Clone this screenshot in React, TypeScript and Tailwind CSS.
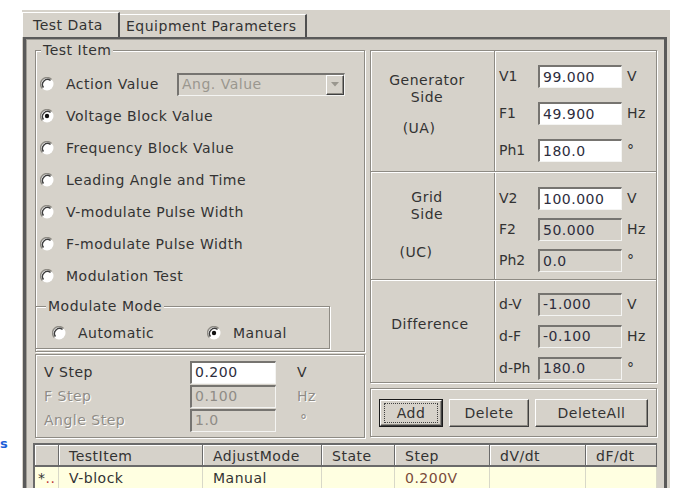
import type { ReactNode } from 'react';

const etched = 'border border-[#8e8b84] shadow-[inset_1px_1px_0_#ffffff,1px_1px_0_#ffffff]';
const raised =
  'border border-t-white border-l-white border-b-[#404040] border-r-[#404040] shadow-[inset_-1px_-1px_0_#8e8b84]';
const disabledText = 'text-[#8f8c86] [text-shadow:1px_1px_0_#ffffff]';

function Radio({ checked = false }: { checked?: boolean }) {
  return (
    <svg width="14" height="14" viewBox="0 0 14 14" className="shrink-0">
      <circle cx="7" cy="7" r="6.5" fill="#ffffff" />
      <path d="M11.6 2.4 A6.5 6.5 0 0 0 2.4 11.6" fill="none" stroke="#8e8b84" strokeWidth="1.4" />
      <path d="M10.5 3.5 A5 5 0 0 0 3.5 10.5" fill="none" stroke="#3c3c3c" strokeWidth="1.4" />
      {checked && <circle cx="7" cy="7" r="2.2" fill="#111111" />}
    </svg>
  );
}

function Field({ value, white = false, dim = false, w = 'w-[84px]' }: { value: string; white?: boolean; dim?: boolean; w?: string }) {
  return (
    <div
      className={`${w} h-[23px] shrink-0 flex items-center pl-[3px] border-t-2 border-l-2 border-b border-r border-t-[#767470] border-l-[#767470] border-b-[#f4f4f2] border-r-[#f4f4f2] ${
        white ? 'bg-white' : ''
      } ${dim ? 'text-[#8f8c86]' : 'text-[#2d2d3d]'}`}
    >
      {value}
    </div>
  );
}

function Group({ title, className, legend = 'ml-[5px]', children }: { title: string; className: string; legend?: string; children: ReactNode }) {
  return (
    <div className={`${etched} ${className}`}>
      <div className={`-mt-[9px] ${legend} w-fit px-[2px] bg-[#d6d2ca] leading-[16px]`}>{title}</div>
      {children}
    </div>
  );
}

const testItems = [
  { label: 'Voltage Block Value', checked: true },
  { label: 'Frequency Block Value' },
  { label: 'Leading Angle and Time' },
  { label: 'V-modulate Pulse Width' },
  { label: 'F-modulate Pulse Width' },
  { label: 'Modulation Test' },
];

type Row = { l: string; v: string; u: string; white?: boolean };

function InputRows({ rows, rowH, pt }: { rows: Row[]; rowH: string; pt: string }) {
  return (
    <div className={`flex-1 pl-[3px] ${pt}`}>
      {rows.map((r) => (
        <div key={r.l} className={`${rowH} flex items-center`}>
          <span className="w-[39px] shrink-0 tracking-normal">{r.l}</span>
          <Field value={r.v} white={r.white} />
          <span className="ml-[5px]">{r.u}</span>
        </div>
      ))}
    </div>
  );
}

function VDivider() {
  return (
    <div className="flex shrink-0">
      <div className="w-px bg-[#8e8b84]" />
      <div className="w-px bg-white" />
    </div>
  );
}

function HDivider() {
  return (
    <div>
      <div className="h-px bg-[#8e8b84]" />
      <div className="h-px bg-white" />
    </div>
  );
}

const columns = [
  { name: '', w: 'w-[24px]' },
  { name: 'TestItem', w: 'w-[144px]' },
  { name: 'AdjustMode', w: 'w-[119px]' },
  { name: 'State', w: 'w-[73px]' },
  { name: 'Step', w: 'w-[95px]' },
  { name: 'dV/dt', w: 'w-[96px]' },
  { name: 'dF/dt', w: 'flex-1' },
];

export default function App() {
  return (
    <div className="w-[700px] h-[500px] bg-white flex font-['DejaVu_Sans',sans-serif] text-[14px] tracking-[0.5px] text-[#333333] overflow-hidden">
      <div className="w-[22px] shrink-0 pt-[434px]">
        <span className="block text-[#1d5fd8] font-bold text-[13px] leading-[20px] tracking-normal">s</span>
      </div>

      <div className="mt-[10px] w-[648px] h-[478px] bg-[#d6d2ca] flex flex-col overflow-hidden">
        {/* tabs */}
        <div className="h-[27px] shrink-0 flex items-end">
          <div className="h-[25px] w-[98px] flex items-center pl-[10px] border-l border-t border-l-white border-t-white border-r-2 border-r-[#505050]">
            Test Data
          </div>
          <div className="h-[23px] w-[187px] flex items-center pl-[6px] border-t border-t-white border-r-2 border-r-[#505050]">
            Equipment Parameters
          </div>
        </div>

        {/* tab page */}
        <div className="flex-1 ml-[1px] mr-[3px] border-t-2 border-l-[3px] border-r-[3px] border-[#5a5a5a] shadow-[inset_1px_1px_0_#a09d96] pl-[9px] pr-[7px]">
          <div className="flex gap-[5px]">
            {/* left column */}
            <div className="w-[330px] flex flex-col">
              <Group title="Test Item" className="mt-[11px] pb-[2px]">
                <div className="mt-[10px] h-[32px] flex items-center pl-[4px]">
                  <Radio />
                  <span className="ml-[12px] w-[111px]">Action Value</span>
                  <div className="w-[168px] h-[23px] flex border-t-2 border-l-2 border-b border-r border-t-[#767470] border-l-[#767470] border-b-[#f4f4f2] border-r-[#f4f4f2]">
                    <div className="flex-1 flex items-center pl-[3px] text-[#9a978f]">Ang. Value</div>
                    <div className={`w-[18px] h-full flex items-center justify-center ${raised}`}>
                      <svg width="8" height="5" viewBox="0 0 8 5">
                        <path d="M0 0 L8 0 L4 4.5 Z" fill="#9a978f" />
                      </svg>
                    </div>
                  </div>
                </div>
                {testItems.map((it) => (
                  <div key={it.label} className="h-[32px] flex items-center pl-[4px]">
                    <Radio checked={it.checked} />
                    <span className="ml-[12px]">{it.label}</span>
                  </div>
                ))}
                <Group title="Modulate Mode" legend="ml-[10px]" className="-ml-px w-[295px] mt-[14px] pb-[3px]">
                  <div className="mt-[7px] h-[24px] flex items-center pl-[16px]">
                    <Radio />
                    <span className="ml-[12px] w-[129px]">Automatic</span>
                    <Radio checked />
                    <span className="ml-[12px]">Manual</span>
                  </div>
                </Group>
              </Group>

              <div className={`${etched} mt-[2px] pt-[5px] pb-[5px]`}>
                <div className="h-[24px] flex items-center pl-[8px]">
                  <span className="w-[146px]">V Step</span>
                  <Field value="0.200" white w="w-[86px]" />
                  <span className="ml-[21px]">V</span>
                </div>
                <div className="h-[24px] flex items-center pl-[8px]">
                  <span className={`w-[146px] ${disabledText}`}>F Step</span>
                  <Field value="0.100" dim w="w-[86px]" />
                  <span className={`ml-[21px] ${disabledText}`}>Hz</span>
                </div>
                <div className="h-[24px] flex items-center pl-[8px]">
                  <span className={`w-[146px] ${disabledText}`}>Angle Step</span>
                  <Field value="1.0" dim w="w-[86px]" />
                  <span className={`ml-[24px] ${disabledText}`}>°</span>
                </div>
              </div>
            </div>

            {/* right column */}
            <div className="w-[287px] flex flex-col">
              <div className={`${etched} mt-[11px]`}>
                <div className="h-[120px] flex">
                  <div className="w-[123px] shrink-0 pt-[21px] leading-[17px] text-center">
                    <div className="pr-[11px]">Generator</div>
                    <div className="pr-[11px]">Side</div>
                    <div className="mt-[14px] pr-[27px]">(UA)</div>
                  </div>
                  <VDivider />
                  <InputRows
                    rowH="h-[37px]"
                    pt="pt-[7px]"
                    rows={[
                      { l: 'V1', v: '99.000', u: 'V', white: true },
                      { l: 'F1', v: '49.900', u: 'Hz', white: true },
                      { l: 'Ph1', v: '180.0', u: '°', white: true },
                    ]}
                  />
                </div>
                <HDivider />
                <div className="h-[106px] flex">
                  <div className="w-[123px] shrink-0 pt-[16px] leading-[17px] text-center">
                    <div className="pr-[11px]">Grid</div>
                    <div className="pr-[11px]">Side</div>
                    <div className="mt-[21px] pr-[33px]">(UC)</div>
                  </div>
                  <VDivider />
                  <InputRows
                    rowH="h-[31px]"
                    pt="pt-[10px]"
                    rows={[
                      { l: 'V2', v: '100.000', u: 'V', white: true },
                      { l: 'F2', v: '50.000', u: 'Hz' },
                      { l: 'Ph2', v: '0.0', u: '°' },
                    ]}
                  />
                </div>
                <HDivider />
                <div className="h-[101px] flex">
                  <div className="w-[123px] shrink-0 pt-[35px] leading-[17px] text-center pr-[5px]">Difference</div>
                  <VDivider />
                  <InputRows
                    rowH="h-[32px]"
                    pt="pt-[7px]"
                    rows={[
                      { l: 'd-V', v: '-1.000', u: 'V' },
                      { l: 'd-F', v: '-0.100', u: 'Hz' },
                      { l: 'd-Ph', v: '180.0', u: '°' },
                    ]}
                  />
                </div>
              </div>

              <div className={`${etched} mt-[5px] h-[49px] pt-[10px] pl-[8px] flex gap-[6px]`}>
                <div className="w-[64px] h-[28px] border border-[#1a1a1a]">
                  <div className={`h-full ${raised} flex items-center justify-center`}>
                    <div className="w-[54px] h-[20px] border border-dotted border-[#404040] flex items-center justify-center">
                      Add
                    </div>
                  </div>
                </div>
                <div className={`w-[80px] h-[28px] ${raised} flex items-center justify-center`}>Delete</div>
                <div className={`w-[113px] h-[28px] ${raised} flex items-center justify-center`}>DeleteAll</div>
              </div>
            </div>
          </div>

          {/* table */}
          <div className="mt-[5px] -ml-[2px] w-[624px] border-t-2 border-l-2 border-[#6a6a6a]">
            <div className="h-[22px] flex">
              {columns.map((c) => (
                <div
                  key={c.name || 'rh'}
                  className={`${c.w} shrink-0 h-full flex items-center pl-[10px] pt-[3px] border-r border-b-2 border-r-[#6a6a6a] border-b-[#6a6a6a] shadow-[inset_1px_1px_0_#ffffff]`}
                >
                  {c.name}
                </div>
              ))}
            </div>
            <div className="h-[21px] flex bg-[#ffffe1]">
              {columns.map((c, i) => (
                <div
                  key={c.name || 'rh'}
                  className={`${c.w} shrink-0 h-full flex items-center pt-[2px] border-r border-r-[#d8d8c8] ${i === 0 ? 'pl-[3px]' : 'pl-[10px]'}`}
                >
                  {i === 0 && (
                    <>
                      <span>*</span>
                      <span className="text-[#c03a3a]">..</span>
                    </>
                  )}
                  {i === 1 && 'V-block'}
                  {i === 2 && 'Manual'}
                  {i === 4 && <span className="text-[#7a4a3a]">0.200V</span>}
                </div>
              ))}
            </div>
          </div>
        </div>
      </div>
    </div>
  );
}
